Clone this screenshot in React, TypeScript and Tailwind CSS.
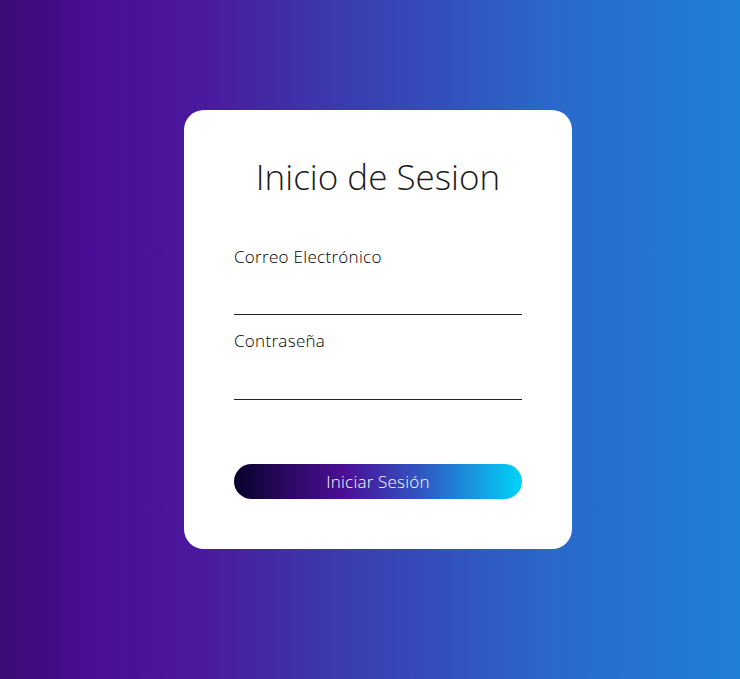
import React from "react";

export default function App() {
  return (
    <div
      className="min-h-[679px] w-full flex justify-center pl-[16px] pt-[110px]"
      style={{
        background:
          "linear-gradient(90deg, #390c73 0%, #4b0c95 12%, #4a1a9e 28%, #3b39ad 45%, #3350bc 60%, #2a69c9 75%, #1f80d6 100%)",
        fontFamily: '"Open Sans", "Noto Sans", sans-serif',
      }}
    >
      <div className="w-[388px] h-[439px] bg-white rounded-[20px] px-[50px] flex flex-col">
        <h1 className="text-[35px] font-light text-[#1a1a1a] text-center mt-[47px] leading-[40px]">
          Inicio de Sesion
        </h1>
        <label className="mt-[48px] text-[17px] tracking-[0.3px] font-light text-black leading-[24px]">
          Correo Electrónico
        </label>
        <input
          type="email"
          className="h-[46px] w-full border-b border-[#222] outline-none bg-transparent"
        />
        <label className="mt-[14px] text-[17px] tracking-[0.3px] font-light text-black leading-[24px]">
          Contraseña
        </label>
        <input
          type="password"
          className="h-[47px] w-full border-b border-[#222] outline-none bg-transparent"
        />
        <button
          className="mt-[64px] h-[35px] w-full rounded-full text-white text-[17px] tracking-[0.2px] font-light"
          style={{
            background:
              "linear-gradient(90deg, #07022b 0%, #2a0862 18%, #4c0e95 38%, #2e5ac4 66%, #00d4fa 100%)",
          }}
        >
          Iniciar Sesión
        </button>
      </div>
    </div>
  );
}
